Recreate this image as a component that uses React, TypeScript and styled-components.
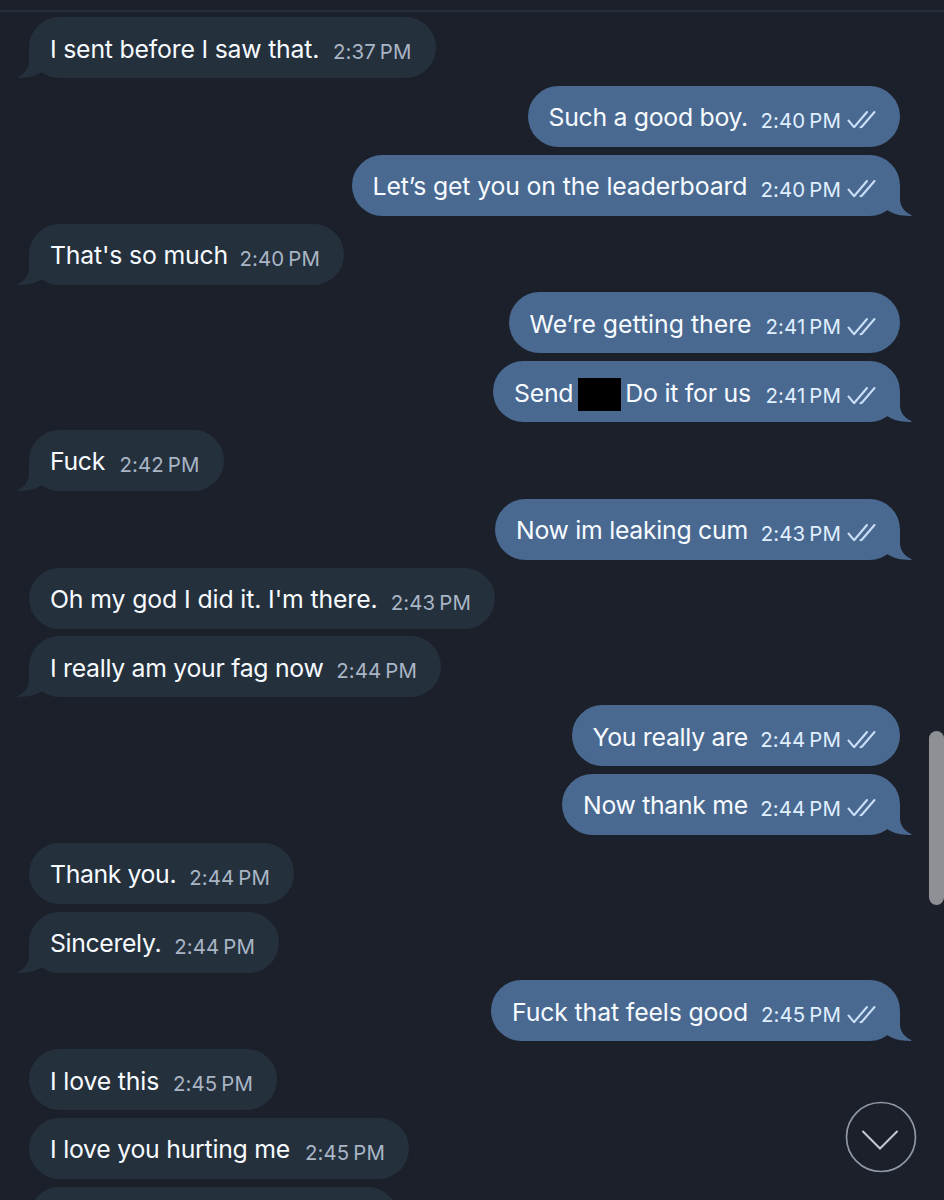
import React from "react";
import styled, { createGlobalStyle, css } from "styled-components";

const GlobalStyle = createGlobalStyle`
  body { margin: 0; background: #1b202b; }
  *, *::before { box-sizing: border-box; }
`;

const Screen = styled.main`
  position: relative;
  width: 944px;
  height: 1200px;
  overflow: hidden;
  background: #1b202b;
  font-family: Inter, "Liberation Sans", sans-serif;
`;

const HeaderEdge = styled.header`
  height: 12px;
  border-bottom: 2px solid #262e3b;
`;

const MessageList = styled.section`
  display: flex;
  flex-direction: column;
  gap: 7.8px;
  padding: 5.2px 44px 0 29px;
`;

const Bubble = styled.article<{ $sent: boolean; $width: number }>`
  position: relative;
  display: flex;
  flex: none;
  align-items: baseline;
  justify-content: space-between;
  align-self: ${(p) => (p.$sent ? "flex-end" : "flex-start")};
  width: ${(p) => p.$width}px;
  height: 61px;
  padding: 16.4px 24px 0 21px;
  border-radius: 30.5px;
  white-space: nowrap;
  color: #f7fbff;
  background: ${(p) => (p.$sent ? "#496991" : "#25303d")};
`;

const Text = styled.span<{ $spacing: number }>`
  font-size: 24.8px;
  line-height: 30px;
  letter-spacing: ${(p) => p.$spacing}px;
`;

const Redaction = styled.span`
  display: inline-block;
  width: 43px;
  height: 33px;
  margin: -8px 4px -8px 5px;
  vertical-align: -1px;
  background: #000;
`;

const Meta = styled.span<{ $sent: boolean }>`
  display: inline-flex;
  align-items: baseline;
  font-size: 20.4px;
  line-height: 24px;
  letter-spacing: 0.12px;
  position: relative;
  top: 1.6px;
  color: ${(p) => (p.$sent ? "#e0efff" : "#a9b5c5")};
`;

const Period = styled.span`
  margin-left: 4px;
`;

const Checks = styled.svg`
  width: 29px;
  height: 19px;
  margin: 0 0 2px 6px;
  align-self: center;
  fill: none;
  stroke: #c9def7;
  stroke-width: 2.1;
  stroke-linecap: round;
  stroke-linejoin: round;
`;

const TailShape = styled.svg<{ $sent: boolean }>`
  position: absolute;
  bottom: 0;
  width: 42px;
  height: 31px;
  ${(p) =>
    p.$sent
      ? css`right: -12px; fill: #496991;`
      : css`left: -12px; transform: scaleX(-1); fill: #25303d;`}
`;

const ScrollThumb = styled.div`
  position: absolute;
  top: 731px;
  right: 0;
  width: 15.5px;
  height: 174px;
  border-radius: 8px;
  background: #8e9096;
`;

const DownButton = styled.button`
  position: absolute;
  left: 845px;
  top: 1101px;
  width: 72px;
  height: 72px;
  padding: 0;
  border: 0;
  background: none;
`;

type Message = {
  text: string;
  after?: string;
  time: string;
  width: number;
  sent?: boolean;
  tail?: boolean;
  spacing: number;
};

const messages: Message[] = [
  { text: "I sent before I saw that.", time: "2:37", width: 406.5, tail: true, spacing: -0.2 },
  { text: "Such a good boy.", time: "2:40", width: 372.5, sent: true, spacing: -0.28 },
  { text: "Let’s get you on the leaderboard", time: "2:40", width: 548.5, sent: true, tail: true, spacing: -0.13 },
  { text: "That's so much", time: "2:40", width: 315, tail: true, spacing: -0.16 },
  { text: "We’re getting there", time: "2:41", width: 391.5, sent: true, spacing: 0 },
  { text: "Send", after: "Do it for us", time: "2:41", width: 407, sent: true, tail: true, spacing: -0.22 },
  { text: "Fuck", time: "2:42", width: 194.5, tail: true, spacing: -0.3 },
  { text: "Now im leaking cum", time: "2:43", width: 405, sent: true, tail: true, spacing: -0.27 },
  { text: "Oh my god I did it. I'm there.", time: "2:43", width: 466, spacing: -0.11 },
  { text: "I really am your fag now", time: "2:44", width: 412, tail: true, spacing: -0.29 },
  { text: "You really are", time: "2:44", width: 328.5, sent: true, spacing: -0.27 },
  { text: "Now thank me", time: "2:44", width: 338, sent: true, tail: true, spacing: -0.3 },
  { text: "Thank you.", time: "2:44", width: 265, spacing: -0.38 },
  { text: "Sincerely.", time: "2:44", width: 250, tail: true, spacing: -0.35 },
  { text: "Fuck that feels good", time: "2:45", width: 409, sent: true, tail: true, spacing: -0.12 },
  { text: "I love this", time: "2:45", width: 248, spacing: -0.15 },
  { text: "I love you hurting me", time: "2:45", width: 380, spacing: -0.24 },
];

function MessageBubble({ message }: { message: Message }) {
  const sent = Boolean(message.sent);
  return (
    <Bubble $sent={sent} $width={message.width}>
      {message.tail && (
        <TailShape $sent={sent} viewBox="0 0 42 31">
          <path d="M10 0H30V14.5C30 22 35.5 27.5 41.6 30.2C41.6 30.8 41 31 40 31C31 31 23 29.2 16.7 24.8L5 15Z" />
        </TailShape>
      )}
      <Text $spacing={message.spacing}>
        {message.text}
        {message.after && <Redaction />}
        {message.after}
      </Text>
      <Meta $sent={sent}>
        {message.time}
        <Period>PM</Period>
        {sent && (
          <Checks viewBox="0 0 29 19">
            <path d="M1.5 10.5L7 17.2L20 2M13.5 17.2L14.8 16.8L27.5 2" />
          </Checks>
        )}
      </Meta>
    </Bubble>
  );
}

export default function App() {
  return (
    <Screen>
      <GlobalStyle />
      <HeaderEdge />
      <MessageList>
        {messages.map((message, i) => (
          <MessageBubble key={i} message={message} />
        ))}
        <Bubble $sent={false} $width={369} />
      </MessageList>
      <ScrollThumb />
      <DownButton aria-label="Scroll to latest">
        <svg width="72" height="72" viewBox="0 0 72 72" fill="none">
          <circle cx="36" cy="36" r="34.5" stroke="#9098a5" strokeWidth="1.7" />
          <path d="M18 30.5L35 47.5L52 30.5" stroke="#c4c9d2" strokeWidth="2" strokeLinecap="round" />
        </svg>
      </DownButton>
    </Screen>
  );
}
